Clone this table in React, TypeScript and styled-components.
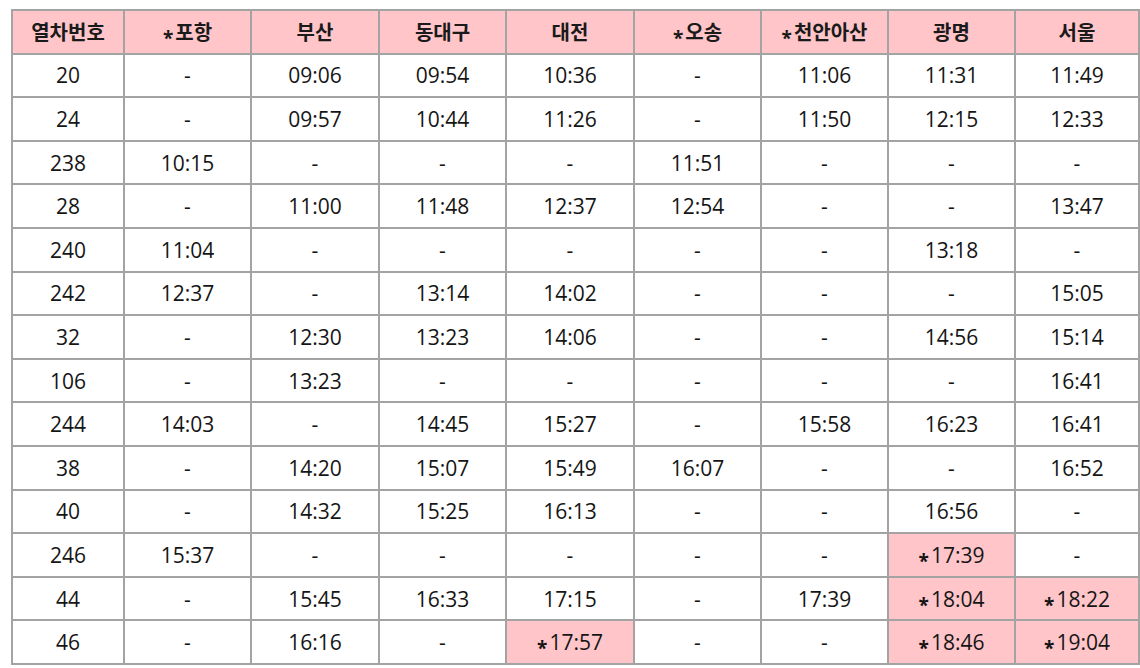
import React from "react";
import styled, { createGlobalStyle } from "styled-components";

const Global = createGlobalStyle`
  html, body { margin: 0; padding: 0; background: #ffffff; }
  body { font-family: "Open Sans", "Noto Sans CJK KR", sans-serif; color: #1a1a1a; }
`;

const Page = styled.div`
  padding: 9px 2px 0 11px;
`;

const Table = styled.table`
  width: 1127px;
  border-collapse: collapse;
  table-layout: fixed;
  border: 2px solid #a3a3a3;
`;

const Th = styled.th`
  background: #ffc5c9;
  border: 2px solid #a3a3a3;
  height: 41.6px;
  padding: 0;
  font-family: "Open Sans", "Noto Sans CJK KR", sans-serif;
  font-size: 20px;
  font-weight: 700;
  text-align: center;
  color: #1a1a1a;
`;

const Td = styled.td<{ $hl?: boolean }>`
  background: ${(p) => (p.$hl ? "#ffc5c9" : "#ffffff")};
  border: 2px solid #a3a3a3;
  height: 41.6px;
  padding: 0;
  font-size: 21px;
  font-weight: 400;
  text-align: center;
  color: #151515;
`;

const Star = styled.span`
  display: inline-block;
  font-size: 19px;
  font-weight: 700;
  margin-right: 2px;
  transform: translateY(5px);
`;

const headers = ["열차번호", "*포항", "부산", "동대구", "대전", "*오송", "*천안아산", "광명", "서울"];
const widths = [112, 127, 128, 127, 128, 127, 127, 127, 124];

const rows: string[][] = [
  ["20", "-", "09:06", "09:54", "10:36", "-", "11:06", "11:31", "11:49"],
  ["24", "-", "09:57", "10:44", "11:26", "-", "11:50", "12:15", "12:33"],
  ["238", "10:15", "-", "-", "-", "11:51", "-", "-", "-"],
  ["28", "-", "11:00", "11:48", "12:37", "12:54", "-", "-", "13:47"],
  ["240", "11:04", "-", "-", "-", "-", "-", "13:18", "-"],
  ["242", "12:37", "-", "13:14", "14:02", "-", "-", "-", "15:05"],
  ["32", "-", "12:30", "13:23", "14:06", "-", "-", "14:56", "15:14"],
  ["106", "-", "13:23", "-", "-", "-", "-", "-", "16:41"],
  ["244", "14:03", "-", "14:45", "15:27", "-", "15:58", "16:23", "16:41"],
  ["38", "-", "14:20", "15:07", "15:49", "16:07", "-", "-", "16:52"],
  ["40", "-", "14:32", "15:25", "16:13", "-", "-", "16:56", "-"],
  ["246", "15:37", "-", "-", "-", "-", "-", "*17:39", "-"],
  ["44", "-", "15:45", "16:33", "17:15", "-", "17:39", "*18:04", "*18:22"],
  ["46", "-", "16:16", "-", "*17:57", "-", "-", "*18:46", "*19:04"],
];

const Cell = ({ text }: { text: string }) =>
  text.startsWith("*") ? (
    <>
      <Star>*</Star>
      {text.slice(1)}
    </>
  ) : (
    <>{text}</>
  );

export default function App() {
  return (
    <Page>
      <Global />
      <Table>
        <colgroup>
          {widths.map((w, i) => (
            <col key={i} style={{ width: w }} />
          ))}
        </colgroup>
        <thead>
          <tr>
            {headers.map((h) => (
              <Th key={h}>
                <Cell text={h} />
              </Th>
            ))}
          </tr>
        </thead>
        <tbody>
          {rows.map((r, i) => (
            <tr key={i}>
              {r.map((c, j) => (
                <Td key={j} $hl={c.startsWith("*")}>
                  <Cell text={c} />
                </Td>
              ))}
            </tr>
          ))}
        </tbody>
      </Table>
    </Page>
  );
}
